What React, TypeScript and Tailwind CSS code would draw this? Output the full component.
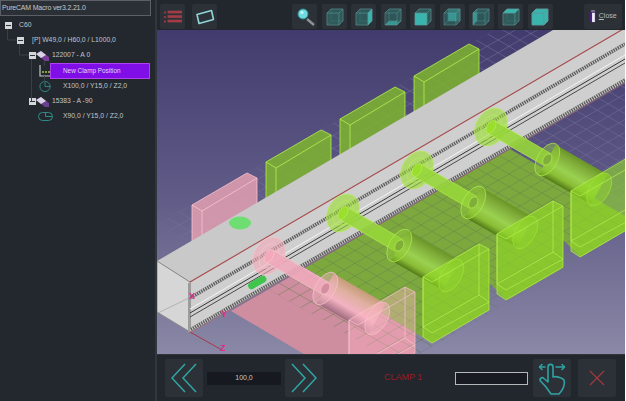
import { type ReactNode } from "react";

const clamps = [3, 2, 1, 0];

function pts(list: number[][], i: number) {
  return list.map(([x, y]) => `${x + 74 * i},${y - 43 * i}`).join(" ");
}

function FloorGrid({ stroke, clip }: { stroke: string; clip: string }) {
  const lines = [];
  for (let k = -30; k < 50; k++) {
    const a = 157 + k * 22;
    lines.push(<line key={`u${k}`} x1={a - 500} y1={225 - 290} x2={a + 500} y2={225 + 290} />);
    lines.push(<line key={`v${k}`} x1={a - 500} y1={225 + 290} x2={a + 500} y2={225 - 290} />);
  }
  return (
    <g stroke={stroke} strokeWidth="0.5" clipPath={clip}>
      {lines}
    </g>
  );
}

function BackBlock({ i }: { i: number }) {
  const pink = i === 0;
  return (
    <g
      fill={pink ? "#e3a0b2" : "#7fb52f"}
      fillOpacity={0.85}
      stroke={pink ? "#f7c3cd" : "#b4ee4e"}
      strokeWidth="0.8"
    >
      <polygon points={pts([[192, 205], [247, 173], [257, 178], [257, 250], [192, 250]], i)} />
      <polyline fill="none" points={pts([[192, 205], [202, 211], [257, 178]], i)} />
      <line x1={202 + 74 * i} y1={211 - 43 * i} x2={202 + 74 * i} y2={250 - 43 * i} />
    </g>
  );
}

function Clamp({ i }: { i: number }) {
  const pink = i === 0;
  const line = pink ? "#f8c6cf" : "#b6f04c";
  const body = pink ? "url(#cylPink)" : "url(#cylGreen)";
  const disc = pink ? "#f3a9b9" : "#9ade2e";
  const x = 269 + 74 * i;
  const y = 256 - 43 * i;
  return (
    <g>
      <g transform={`translate(${x},${y}) rotate(30)`} stroke={line} strokeWidth="0.6">
        <ellipse cx="0" cy="0" rx="15" ry="20" fill={disc} fillOpacity="0.6" />
        <ellipse cx="0" cy="0" rx="9" ry="13" fill="none" />
        <rect x="0" y="-7" width="66" height="14" fill={pink ? "#eeaabb" : "#97d63a"} fillOpacity="0.9" />
        <ellipse cx="0" cy="0" rx="4" ry="7" fill={disc} />
        <rect x="65" y="-17" width="60" height="34" fill={body} stroke="none" />
        <ellipse cx="65" cy="0" rx="10" ry="18" fill={pink ? "#f2b4bf" : "#93cf38"} fillOpacity="0.45" />
        <ellipse cx="65" cy="0" rx="4" ry="6" fill={pink ? "#d58ea0" : "#7fae3a"} />
        <ellipse cx="125" cy="0" rx="10" ry="18" fill={pink ? "#f2b4bf" : "#93cf38"} fillOpacity="0.45" />
      </g>
      <g stroke={line} strokeWidth="0.7" fill="none">
        <polygon
          fill={pink ? "#ffb4c2" : "#93dc26"}
          fillOpacity={pink ? 0.4 : 0.6}
          points={pts([[349, 320], [405, 287], [415, 292], [415, 353], [358, 386], [349, 380]], i)}
        />
        <polyline points={pts([[349, 320], [358, 325], [415, 292]], i)} />
        <polyline points={pts([[349, 370], [358, 376], [415, 345]], i)} />
        <polyline points={pts([[405, 287], [405, 338], [415, 345]], i)} />
        <polyline points={pts([[349, 370], [405, 338]], i)} />
        <polyline points={pts([[349, 320], [349, 370]], i)} />
      </g>
    </g>
  );
}

function Scene() {
  const red = (off: number) => ({ x1: 190, y1: 282 + off, x2: 625, y2: 28 + off });
  return (
    <svg viewBox="157 30 468 324" className="block h-[324px] w-[468px]">
      <defs>
        <linearGradient id="bg" x1="0" y1="0" x2="0" y2="1">
          <stop offset="0" stopColor="#423c6e" />
          <stop offset="0.5" stopColor="#5f5a86" />
          <stop offset="1" stopColor="#8a88a6" />
        </linearGradient>
        <linearGradient id="cylGreen" x1="0" y1="0" x2="0" y2="1">
          <stop offset="0" stopColor="#6a9526" />
          <stop offset="0.2" stopColor="#80ac3a" />
          <stop offset="0.55" stopColor="#9ad150" />
          <stop offset="0.8" stopColor="#8abd35" />
          <stop offset="1" stopColor="#527a18" />
        </linearGradient>
        <linearGradient id="cylPink" x1="0" y1="0" x2="0" y2="1">
          <stop offset="0" stopColor="#c59c78" />
          <stop offset="0.3" stopColor="#dfb0a0" />
          <stop offset="0.65" stopColor="#f3b2c2" />
          <stop offset="1" stopColor="#9f6a7e" />
        </linearGradient>
        <clipPath id="gridArea">
          <polygon points="157,225 520,15 760,155 400,365" />
        </clipPath>
        <clipPath id="floorArea">
          <polygon points="231,311 510,149 625,216 625,231 400,365 305,310" />
        </clipPath>
      </defs>
      <rect x="157" y="30" width="468" height="324" fill="url(#bg)" />
      <FloorGrid stroke="#77749f" clip="url(#gridArea)" />
      {clamps.map((i) => (
        <BackBlock key={i} i={i} />
      ))}

      {/* floor plates */}
      <polygon
        fill="#7da83e"
        points="305,268 510,149 625,216 625,231 581,257 563,240 563,268 507,300 489,283 489,310 432,343"
      />
      <polygon fill="#cf8da0" points="231,311 305,268 415,333 415,353 358,386" />
      <g clipPath="url(#floorArea)">
        <FloorGrid stroke="#66824f" clip="url(#gridArea)" />
      </g>

      {/* beam */}
      <polygon fill="#c9c9c9" points="157,261 190,282 625,28 625,-12" />
      <polygon fill="#cfcfcf" points="190,282 625,28 625,82 190,332" />
      <polygon fill="#d6d6d6" stroke="#8a8a8a" strokeWidth="1" points="157,261 190,282 190,332 157,312" />
      <line x1="158" y1="313" x2="189" y2="298" stroke="#9a9a9a" strokeWidth="0.6" />
      <rect x="188" y="283" width="3" height="49" fill="#9c9c9c" />
      <line {...red(0)} stroke="#a9494a" strokeWidth="1.1" />
      <line {...red(16)} stroke="#5c5c5c" strokeWidth="3.4" />
      <line {...red(16)} stroke="#cfcfcf" strokeWidth="3.4" strokeDasharray="1 1.4" />
      <line {...red(27)} stroke="#f4f4f4" strokeWidth="1" />
      <line {...red(31)} stroke="#363636" strokeWidth="1" />
      <line {...red(35)} stroke="#4a4a4a" strokeWidth="1" />
      <line x1="190" y1="330" x2="625" y2="80" stroke="#5c5c5c" strokeWidth="3.4" />
      <line x1="190" y1="330" x2="625" y2="80" stroke="#cfcfcf" strokeWidth="3.4" strokeDasharray="1 1.4" />
      <line x1="190" y1="333" x2="625" y2="83" stroke="#a96a6a" strokeWidth="0.7" />
      <ellipse cx="240" cy="223" rx="11" ry="6.5" fill="#6ede72" />
      <rect x="247" y="279" width="20" height="7" rx="3.5" transform="rotate(-30 257 282)" fill="#3fc44c" />

      {clamps.map((i) => (
        <Clamp key={i} i={i} />
      ))}

      {/* axes */}
      <line x1="190" y1="332" x2="222" y2="350" stroke="#a8354a" strokeWidth="1" />
      <g fill="#e0288a" fontFamily="'Liberation Sans', sans-serif" fontSize="9" fontWeight="700">
        <text x="189" y="299">X</text>
        <text x="221" y="317">Y</text>
        <text x="220" y="351">Z</text>
      </g>
    </svg>
  );
}

function ToolButton({ children, className }: { children: ReactNode; className?: string }) {
  return (
    <div
      className={`flex h-[25px] w-[25px] shrink-0 items-center justify-center rounded-[2px] bg-[#2c3138] ${className ?? ""}`}
    >
      {children}
    </div>
  );
}

type Face = "back" | "right" | "bottom" | "front" | "left" | "top" | "all" | "none";

function Cube({ face }: { face: Face }) {
  const on = "#39b5ae";
  const off = "#2f5f60";
  const f = (n: Face) => (face === n || face === "all" ? on : off);
  const opacity = (n: Face) => (face === n || face === "all" ? 1 : 0.7);
  return (
    <svg viewBox="0 0 20 20" className="h-[20px] w-[20px]" stroke="#5f9695" strokeWidth="0.6" strokeLinejoin="round">
      <polygon points="6,2 18,2 18,14 6,14" fill={f("back")} opacity={opacity("back")} />
      <polygon points="2,6 6,2 6,14 2,18" fill={f("left")} opacity={opacity("left")} />
      <polygon points="2,18 6,14 18,14 14,18" fill={f("bottom")} opacity={opacity("bottom")} />
      <polygon points="2,6 14,6 14,18 2,18" fill={f("front")} opacity={face === "back" || face === "left" || face === "bottom" ? 0.35 : opacity("front")} />
      <polygon points="2,6 6,2 18,2 14,6" fill={f("top")} opacity={opacity("top")} />
      <polygon points="14,6 18,2 18,14 14,18" fill={f("right")} opacity={opacity("right")} />
    </svg>
  );
}

function Toolbar() {
  const faces: Face[] = ["none", "right", "bottom", "front", "back", "left", "top", "all"];
  return (
    <div className="flex h-[30px] items-start bg-[#22272e] pt-[4px] pl-[3px]">
      <ToolButton>
        <svg viewBox="0 0 20 14" className="h-[14px] w-[18px]" fill="#a03c44">
          <rect x="0" y="1" width="2" height="2" />
          <rect x="0" y="6" width="2" height="2" />
          <rect x="0" y="11" width="2" height="2" />
          <rect x="4" y="0" width="16" height="3" />
          <rect x="4" y="5" width="16" height="3" />
          <rect x="4" y="10" width="16" height="3" />
        </svg>
      </ToolButton>
      <ToolButton className="ml-[7px]">
        <svg viewBox="0 0 20 16" className="h-[16px] w-[20px]">
          <polygon points="2,5.5 16.5,1.5 18.5,10.5 4,14.5" fill="none" stroke="#8fd6d6" strokeWidth="1.6" strokeLinejoin="round" />
        </svg>
      </ToolButton>
      <ToolButton className="ml-[75px]">
        <svg viewBox="0 0 22 22" className="h-[22px] w-[22px]">
          <line x1="13" y1="13" x2="20" y2="19" stroke="#8a9298" strokeWidth="2.4" />
          <circle cx="9" cy="8" r="5" fill="#6fdbe0" stroke="#2f8c92" strokeWidth="1" />
          <circle cx="8" cy="6.5" r="1.6" fill="#c8f6f7" />
        </svg>
      </ToolButton>
      <div className="ml-[5px] flex gap-[4.4px]">
        {faces.map((face) => (
          <ToolButton key={face}>
            <Cube face={face} />
          </ToolButton>
        ))}
      </div>
      <div className="ml-[31px] flex h-[25px] w-[38px] items-center justify-center gap-[2px] rounded-[2px] bg-[#2c3138]">
        <svg viewBox="0 0 8 14" className="h-[13px] w-[8px]">
          <rect x="1" y="2" width="6" height="11" fill="#4b1f8f" />
          <rect x="3" y="3" width="3" height="10" fill="#f0edf8" />
          <rect x="2" y="0" width="4" height="2" fill="#7a7a88" />
        </svg>
        <span className="text-[7px] text-[#b6babf]">
          <span className="underline">C</span>lose
        </span>
      </div>
    </div>
  );
}

function Chevrons({ flip }: { flip?: boolean }) {
  return (
    <svg viewBox="0 0 26 30" className={`h-[30px] w-[26px] ${flip ? "rotate-180" : ""}`} fill="none" stroke="#2fa6a2" strokeWidth="1.5">
      <polyline points="14,1 1,15 14,29" />
      <polyline points="25,1 12,15 25,29" />
    </svg>
  );
}

function BottomButton({ children }: { children: ReactNode }) {
  return (
    <div className="flex h-[38px] w-[38px] shrink-0 items-center justify-center rounded-[2px] bg-[#2c3138]">
      {children}
    </div>
  );
}

function BottomBar() {
  return (
    <div className="flex h-[47px] items-center border-t border-[#30353c] bg-[#22272e] pl-[8px] text-[#a3a7ab]">
      <BottomButton>
        <Chevrons />
      </BottomButton>
      <div className="mx-[4px] flex h-[13px] w-[74px] items-center justify-center bg-[#16191f] text-[7px] text-[#c6c8cb]">
        100,0
      </div>
      <BottomButton>
        <Chevrons flip />
      </BottomButton>
      <span className="ml-[61px] w-[71px] text-[9px] text-[#9a1c20]">CLAMP 1</span>
      <div className="h-[13px] w-[73px] border border-[#b4b6b8] bg-[#181b22]" />
      <div className="ml-[5px]">
        <BottomButton>
          <svg viewBox="0 0 30 34" className="h-[34px] w-[30px]" fill="none" stroke="#2fa3a3" strokeWidth="1.6" strokeLinejoin="round" strokeLinecap="round">
            <path d="M9 26 L3.5 20 C2 17.5 5 15.5 7 17.5 L11 21 L11 6 C11 2.5 16 2.5 16 6 L16 16 C19 15 25 16.5 27 19 C28.5 23 26 29 22 33 L14 33 Z" />
            <path d="M3 6 H8 M19 6 H27" strokeWidth="1.5" />
            <path d="M5 3.5 L2.5 6 L5 8.5 M25 3.5 L27.5 6 L25 8.5" strokeWidth="1.5" />
          </svg>
        </BottomButton>
      </div>
      <div className="ml-[7px]">
        <BottomButton>
          <svg viewBox="0 0 16 16" className="h-[16px] w-[16px]" stroke="#a53a3e" strokeWidth="1.1">
            <line x1="1" y1="1" x2="15" y2="15" />
            <line x1="15" y1="1" x2="1" y2="15" />
          </svg>
        </BottomButton>
      </div>
    </div>
  );
}

function Toggle() {
  return (
    <span className="flex h-[7px] w-[7px] items-center justify-center bg-[#d4d6d8]">
      <span className="h-[1px] w-[5px] bg-[#30343a]" />
    </span>
  );
}

const WedgeIcon = ({ dark }: { dark?: boolean }) => (
  <svg viewBox="0 0 14 10" className="h-[10px] w-[14px]">
    <polygon points="0,3 5,0 13,6 13,10 9,10" fill={dark ? "#6b3f8e" : "#7a3f9a"} />
    <polygon points="0,3 5,0 10,4 5,7" fill="#d8d4e2" />
  </svg>
);

function Tree() {
  const text = "whitespace-nowrap text-[#c2c5c9]";
  return (
    <div className="relative pt-[2px] text-[6.8px] leading-none">
      <svg className="absolute top-0 left-0 h-[110px] w-[60px]" fill="none" stroke="#3b4047" strokeWidth="1">
        <path d="M7.5 13 V24 H17 M19.5 28 V39 H29 M31.5 43 V85 M44.5 45 V50 M44.5 60 V66" />
      </svg>
      <div className="flex h-[15px] items-center">
        <div className="w-[19px] pl-[5px]"><Toggle /></div>
        <span className={text}>C60</span>
      </div>
      <div className="flex h-[15px] items-center">
        <div className="w-[32px] pl-[17px]"><Toggle /></div>
        <span className={text}>[P]&nbsp;W49,0 / H60,0 / L1000,0</span>
      </div>
      <div className="flex h-[15px] items-center">
        <div className="flex w-[52px] items-center pl-[29px]"><Toggle /><WedgeIcon /></div>
        <span className={text}>122007 - A 0</span>
      </div>
      <div className="flex h-[15.5px] items-center">
        <div className="flex h-full w-[39px] shrink-0" />
        <svg viewBox="0 0 11 14" className="h-[14px] w-[11px] shrink-0" fill="none">
          <path d="M1 1 V12 H11" stroke="#c3c6c9" strokeWidth="1.2" />
          <path d="M3 8 H11" stroke="#9ad13a" strokeWidth="1.6" strokeDasharray="2 1" />
        </svg>
        <div className="flex h-full w-[100px] shrink-0 items-center border border-[#b040f0] bg-[#7f0fe6] pl-[12px] text-[6.4px] text-[#e2d4f2]">
          New Clamp Position
        </div>
      </div>
      <div className="flex h-[15.5px] items-center">
        <div className="w-[38px] shrink-0" />
        <svg viewBox="0 0 14 14" className="h-[13px] w-[14px] shrink-0" fill="none" stroke="#2c8d88" strokeWidth="1">
          <circle cx="7" cy="7" r="5.5" />
          <path d="M7 7 H13 M7 1 V7" />
        </svg>
        <span className={`ml-[11px] ${text}`}>X100,0 / Y15,0 / Z2,0</span>
      </div>
      <div className="flex h-[15px] items-center">
        <div className="flex w-[52px] items-center pl-[29px]"><Toggle /><WedgeIcon dark /></div>
        <span className={text}>15383 - A -90</span>
      </div>
      <div className="flex h-[15px] items-center">
        <div className="w-[38px] shrink-0" />
        <svg viewBox="0 0 15 9" className="h-[9px] w-[15px] shrink-0" fill="none" stroke="#2c8d88" strokeWidth="1">
          <rect x="0.5" y="0.5" width="14" height="8" rx="4" />
          <path d="M7.5 0.5 V4.5 H14" />
        </svg>
        <span className={`ml-[10px] ${text}`}>X90,0 / Y15,0 / Z2,0</span>
      </div>
    </div>
  );
}

export default function App() {
  return (
    <div className="flex h-[401px] w-[626px] bg-white font-['Liberation_Sans',sans-serif]">
      <aside className="h-full w-[157px] shrink-0 border-r-2 border-[#31363d] bg-[#23282f]">
        <div className="flex h-[16px] w-[151px] items-center border border-[#5c6066] bg-[#2b2f36] pl-[1px] text-[7px] tracking-[-0.2px] whitespace-nowrap text-[#c4c7ca]">
          PureCAM Macro ver3.2.21.0
        </div>
        <Tree />
      </aside>
      <main className="flex w-[468px] shrink-0 flex-col">
        <Toolbar />
        <Scene />
        <BottomBar />
      </main>
    </div>
  );
}
